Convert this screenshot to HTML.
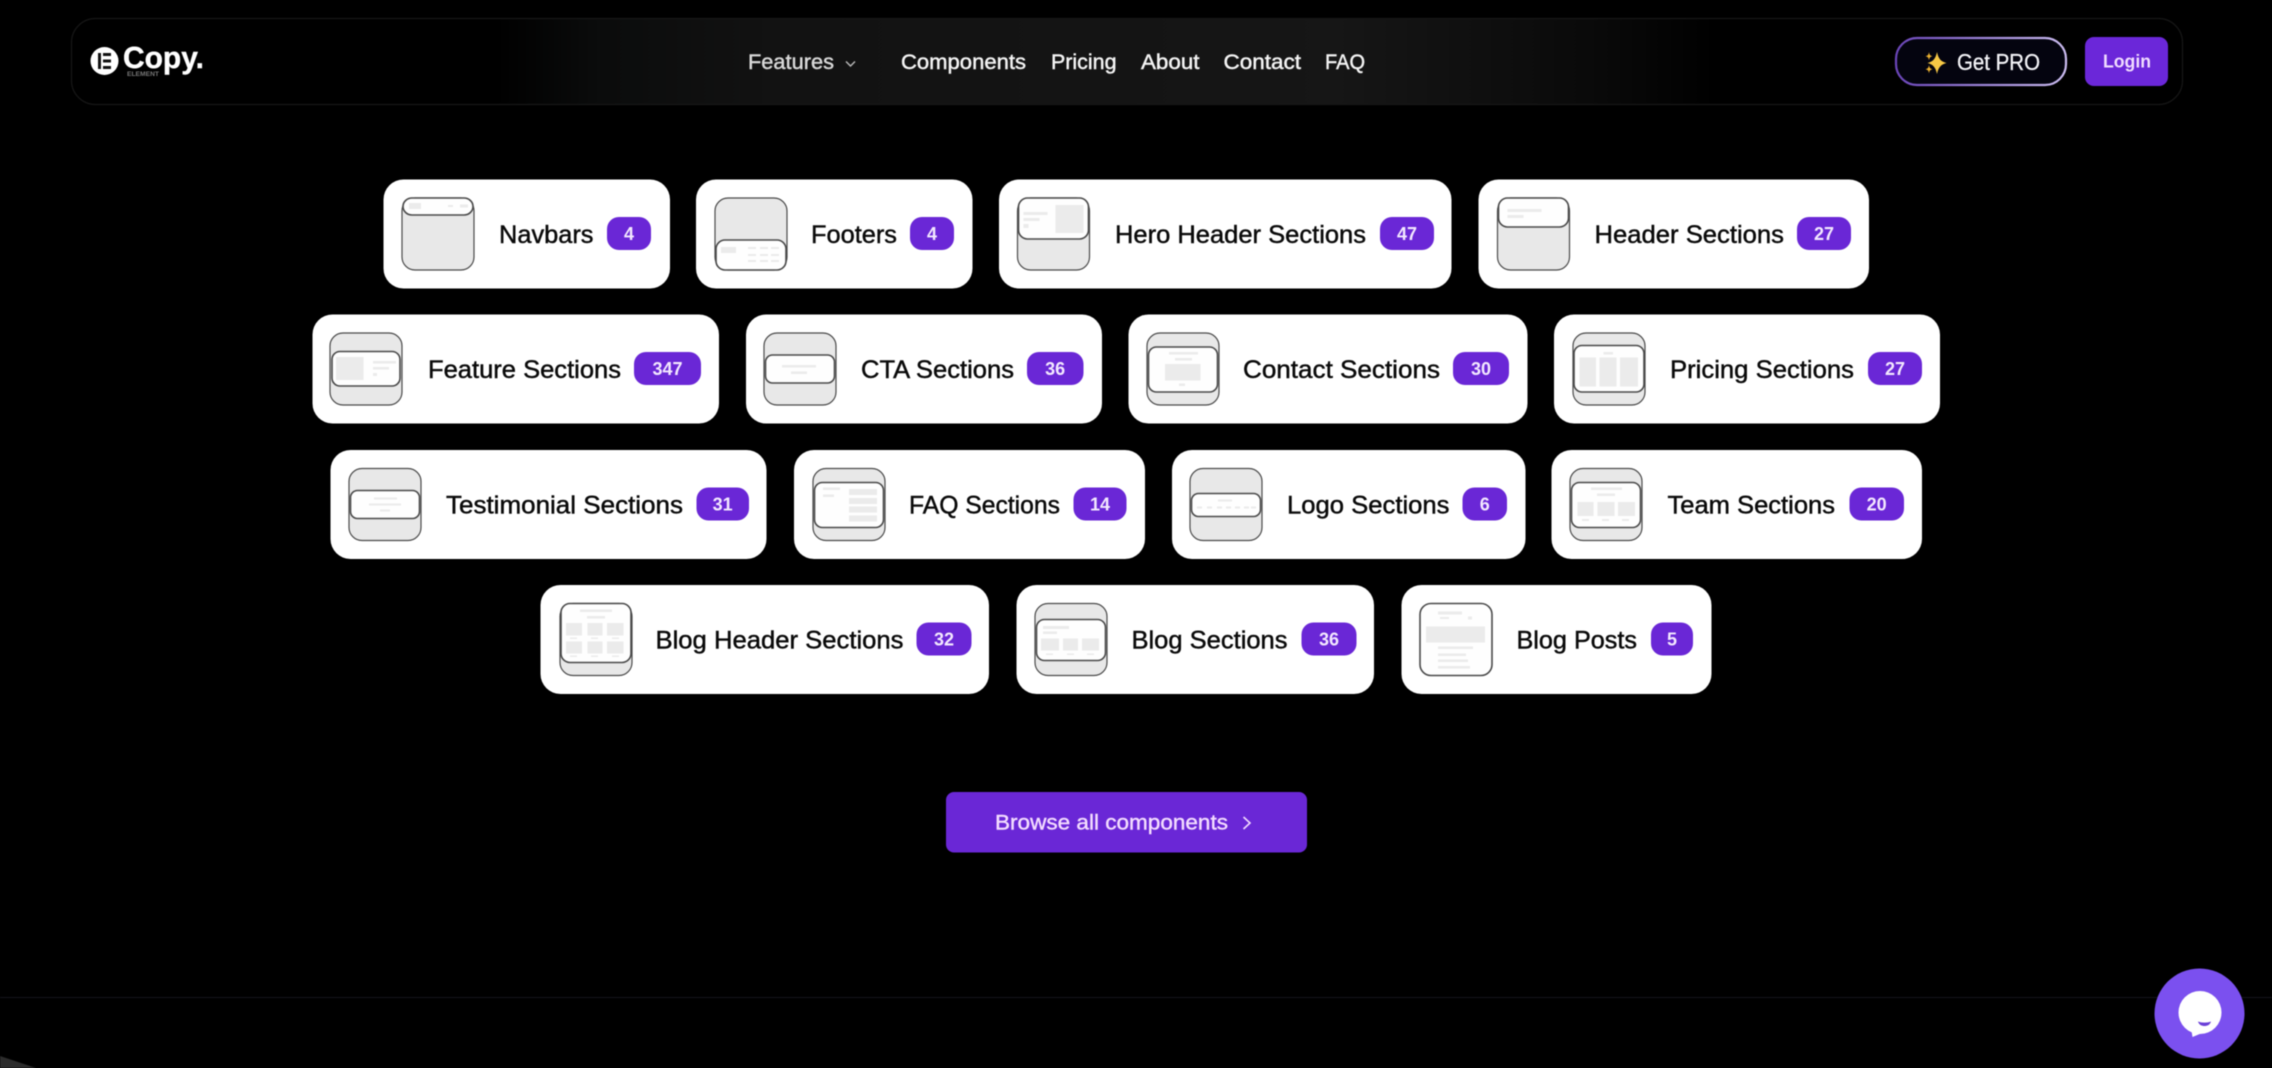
<!DOCTYPE html>
<html lang="en"><head><meta charset="utf-8"><title>Copy Element Components</title>
<style>
html,body{margin:0;padding:0;background:#000;width:2272px;height:1068px;overflow:hidden}
svg{display:block;font-family:"Liberation Sans",sans-serif;filter:blur(.55px)}
.c{fill:#fff}
.o{fill:#e8e8e8;stroke:#4a4a4a;stroke-width:1.2}
.p{fill:#fefefe;stroke:#4a4a4a;stroke-width:1.6}
.g{fill:#ebebeb}
.l{font-size:25px;fill:#0a0a0a;stroke:#0a0a0a;stroke-width:.45}
.b{fill:#6a27d6}
.n{font-size:18px;font-weight:700;fill:#f3e8ff;text-anchor:middle}
.m{font-size:21px;fill:#f4f4f4;stroke:#f4f4f4;stroke-width:.45}
</style></head><body>
<svg width="2272" height="1068" viewBox="0 0 2272 1068" xmlns="http://www.w3.org/2000/svg">
<defs>
<linearGradient id="nv" x1="0" x2="1" y1="0" y2="0">
<stop offset="0" stop-color="#000"/><stop offset=".2" stop-color="#000"/><stop offset=".25" stop-color="#0b0c0c"/><stop offset=".33" stop-color="#121212"/><stop offset=".6" stop-color="#161616"/><stop offset=".72" stop-color="#0a0a0a"/><stop offset=".78" stop-color="#000"/><stop offset="1" stop-color="#000"/>
</linearGradient>
<linearGradient id="pb" x1="0" x2="1" y1="0" y2="0">
<stop offset="0" stop-color="#6a45b8"/><stop offset=".5" stop-color="#9a82d4"/><stop offset="1" stop-color="#cbbcf0"/>
</linearGradient>
</defs>
<rect width="2272" height="1068" fill="#000"/>

<!-- Navbar -->
<rect x="71.500" y="18.500" width="2111" height="86" rx="24" fill="url(#nv)" stroke="#171717" stroke-width="1.2"/>
<circle cx="104.500" cy="61" r="14" fill="#fff"/>
<rect x="98" y="53" width="3" height="16" fill="#111"/>
<rect x="103" y="53" width="8" height="3" fill="#111"/><rect x="103" y="59.500" width="8" height="3" fill="#111"/><rect x="103" y="66" width="8" height="3" fill="#111"/>
<text x="123" y="68" font-size="31" font-weight="700" fill="#fff" stroke="#fff" stroke-width=".4" textLength="81" lengthAdjust="spacingAndGlyphs">Copy.</text>
<text x="127" y="76" font-size="6" font-weight="700" fill="#777" textLength="32" lengthAdjust="spacingAndGlyphs">ELEMENT</text>

<text class="m" x="748" y="69" style="fill:#d8d8d8;stroke:#d8d8d8" textLength="86" lengthAdjust="spacingAndGlyphs">Features</text>
<path d="M846 61.500l4.500 4.500 4.500-4.500" fill="none" stroke="#bbb" stroke-width="1.400"/>
<text class="m" x="901" y="69" textLength="125" lengthAdjust="spacingAndGlyphs">Components</text>
<text class="m" x="1051" y="69" textLength="65.500" lengthAdjust="spacingAndGlyphs">Pricing</text>
<text class="m" x="1141" y="69" textLength="58.500" lengthAdjust="spacingAndGlyphs">About</text>
<text class="m" x="1223.500" y="69" textLength="77.500" lengthAdjust="spacingAndGlyphs">Contact</text>
<text class="m" x="1325" y="69" textLength="40" lengthAdjust="spacingAndGlyphs">FAQ</text>

<rect x="1896" y="38" width="170" height="47" rx="21" fill="#04040f" stroke="url(#pb)" stroke-width="2.200"/>
<path d="M1937 52c1.500 7 4 9.500 9.500 11-5.500 1.500-8 4-9.500 11-1.500-7-4-9.500-9.500-11 5.500-1.500 8-4 9.500-11z" fill="#f7c845"/>
<path d="M1929 52c.5 3 1.200 3.700 3.500 4.200-2.300.5-3 1.200-3.500 4.200-.5-3-1.200-3.700-3.500-4.200 2.300-.5 3-1.200 3.500-4.200zM1929 65c.5 3 1.200 3.700 3.500 4.200-2.300.5-3 1.200-3.500 4.200-.5-3-1.200-3.700-3.500-4.200 2.300-.5 3-1.200 3.500-4.200z" fill="#eab030"/>
<text x="1957" y="70" font-size="23" fill="#f4f4f8" stroke="#f4f4f8" stroke-width=".3" textLength="83" lengthAdjust="spacingAndGlyphs">Get PRO</text>
<rect x="2085" y="37" width="83" height="49" rx="9" fill="#6b27d9"/>
<text x="2103" y="67.500" font-size="18" font-weight="700" fill="#f0dcff" textLength="48" lengthAdjust="spacingAndGlyphs">Login</text>

<!-- Row 1 -->
<rect class="c" x="383.500" y="179.500" width="286.500" height="109" rx="20"/>
<g transform="translate(402,198)"><rect class="o" width="72" height="72" rx="13"/><rect class="p" x="1" y="0" width="70" height="17" rx="9"/><rect class="g" x="7" y="5" width="12" height="6"/><rect class="g" x="46" y="7" width="5" height="2"/><rect class="g" x="58" y="6.500" width="8" height="3"/></g>
<text class="l" x="499" y="243" textLength="94.500" lengthAdjust="spacingAndGlyphs">Navbars</text>
<rect class="b" x="607" y="217" width="44" height="33" rx="12"/><text class="n" x="629" y="240">4</text>

<rect class="c" x="696" y="179.500" width="276.500" height="109" rx="20"/>
<g transform="translate(715,198)"><rect class="o" width="72" height="72" rx="13"/><rect class="p" x="1" y="42" width="70" height="30" rx="9"/><rect class="g" x="6" y="49" width="15" height="6"/><rect class="g" x="33" y="49" width="8" height="2"/><rect class="g" x="45" y="49" width="8" height="2"/><rect class="g" x="56" y="49" width="8" height="2"/><rect class="g" x="33" y="56" width="8" height="2"/><rect class="g" x="45" y="56" width="8" height="2"/><rect class="g" x="56" y="56" width="8" height="2"/><rect class="g" x="33" y="62" width="8" height="2"/><rect class="g" x="45" y="62" width="8" height="2"/><rect class="g" x="56" y="62" width="8" height="2"/></g>
<text class="l" x="811" y="243" textLength="86" lengthAdjust="spacingAndGlyphs">Footers</text>
<rect class="b" x="910" y="217" width="44" height="33" rx="12"/><text class="n" x="932" y="240">4</text>

<rect class="c" x="999" y="179.500" width="452.500" height="109" rx="20"/>
<g transform="translate(1017.500,198)"><rect class="o" width="72" height="72" rx="13"/><rect class="p" x="1" y="0" width="70" height="41" rx="9"/><rect class="g" x="6" y="14" width="24" height="3"/><rect class="g" x="6" y="20" width="16" height="3"/><rect class="g" x="6" y="26" width="5" height="4"/><rect class="g" x="38" y="7" width="28" height="28"/></g>
<text class="l" x="1115" y="243" textLength="251" lengthAdjust="spacingAndGlyphs">Hero Header Sections</text>
<rect class="b" x="1380" y="217" width="54" height="33" rx="12"/><text class="n" x="1407" y="240">47</text>

<rect class="c" x="1478.500" y="179.500" width="390.500" height="109" rx="20"/>
<g transform="translate(1497.500,198)"><rect class="o" width="72" height="72" rx="13"/><rect class="p" x="1" y="0" width="70" height="29" rx="9"/><rect class="g" x="10" y="11" width="34" height="3"/><rect class="g" x="10" y="17" width="16" height="3"/></g>
<text class="l" x="1594.500" y="243" textLength="189.500" lengthAdjust="spacingAndGlyphs">Header Sections</text>
<rect class="b" x="1797" y="217" width="54" height="33" rx="12"/><text class="n" x="1824" y="240">27</text>

<!-- Row 2 -->
<rect class="c" x="312.500" y="314.500" width="406.500" height="109" rx="20"/>
<g transform="translate(330,333)"><rect class="o" width="72" height="72" rx="13"/><rect class="p" x="2" y="18.500" width="68" height="34.500" rx="8"/><rect class="g" x="6" y="24" width="27.500" height="23"/><rect class="g" x="43" y="28" width="23" height="2.500"/><rect class="g" x="43" y="34" width="16" height="2.500"/><rect class="g" x="43" y="40" width="4" height="3"/></g>
<text class="l" x="428" y="378" textLength="193" lengthAdjust="spacingAndGlyphs">Feature Sections</text>
<rect class="b" x="634" y="352" width="67" height="33" rx="12"/><text class="n" x="667.500" y="375">347</text>

<rect class="c" x="746" y="314.500" width="356" height="109" rx="20"/>
<g transform="translate(764,333)"><rect class="o" width="72" height="72" rx="13"/><rect class="p" x="1.500" y="22" width="69" height="28" rx="7"/><rect class="g" x="18" y="32" width="34" height="2.500"/><rect class="g" x="27" y="38.500" width="16" height="2.500"/></g>
<text class="l" x="861" y="378" textLength="153" lengthAdjust="spacingAndGlyphs">CTA Sections</text>
<rect class="b" x="1027" y="352" width="56.500" height="33" rx="12"/><text class="n" x="1055.200" y="375">36</text>

<rect class="c" x="1128.500" y="314.500" width="399" height="109" rx="20"/>
<g transform="translate(1147,333)"><rect class="o" width="72" height="72" rx="13"/><rect class="p" x="1.500" y="14" width="69" height="45" rx="8"/><rect class="g" x="22" y="19" width="29" height="2.500"/><rect class="g" x="28" y="25" width="17" height="2.500"/><rect class="g" x="18" y="31" width="35.500" height="16.500"/><rect class="g" x="32" y="50.500" width="6" height="2.500"/></g>
<text class="l" x="1243" y="378" textLength="197" lengthAdjust="spacingAndGlyphs">Contact Sections</text>
<rect class="b" x="1453" y="352" width="56" height="33" rx="12"/><text class="n" x="1481" y="375">30</text>

<rect class="c" x="1554" y="314.500" width="386" height="109" rx="20"/>
<g transform="translate(1573,333)"><rect class="o" width="72" height="72" rx="13"/><rect class="p" x="1" y="12.500" width="70" height="46.500" rx="8"/><rect class="g" x="30.500" y="19" width="9.500" height="2.500"/><rect class="g" x="6.500" y="24.500" width="16.500" height="29"/><rect class="g" x="26.500" y="24.500" width="17" height="29"/><rect class="g" x="47" y="24.500" width="18" height="29"/></g>
<text class="l" x="1670" y="378" textLength="184" lengthAdjust="spacingAndGlyphs">Pricing Sections</text>
<rect class="b" x="1868" y="352" width="54" height="33" rx="12"/><text class="n" x="1895" y="375">27</text>

<!-- Row 3 -->
<rect class="c" x="330.500" y="450" width="436" height="109" rx="20"/>
<g transform="translate(349,468.500)"><rect class="o" width="72" height="72" rx="13"/><rect class="p" x="1.500" y="22" width="69" height="28" rx="7"/><rect class="g" x="25" y="29" width="23" height="2"/><rect class="g" x="20" y="35" width="32" height="2"/><rect class="g" x="31" y="41" width="10" height="2"/></g>
<text class="l" x="446" y="513.500" textLength="237" lengthAdjust="spacingAndGlyphs">Testimonial Sections</text>
<rect class="b" x="696.500" y="487.500" width="52.500" height="33" rx="12"/><text class="n" x="722.700" y="510.500">31</text>

<rect class="c" x="794" y="450" width="351" height="109" rx="20"/>
<g transform="translate(813,468.500)"><rect class="o" width="72" height="72" rx="13"/><rect class="p" x="1.500" y="14" width="69" height="45" rx="8"/><rect class="g" x="10" y="19" width="17" height="2.500"/><rect class="g" x="10" y="26" width="11" height="2.500"/><rect class="g" x="36" y="20.500" width="28" height="6"/><rect class="g" x="36" y="29.500" width="28" height="6"/><rect class="g" x="36" y="38" width="28" height="6"/><rect class="g" x="36" y="47" width="28" height="6"/></g>
<text class="l" x="909" y="513.500" textLength="151" lengthAdjust="spacingAndGlyphs">FAQ Sections</text>
<rect class="b" x="1073.500" y="487.500" width="53" height="33" rx="12"/><text class="n" x="1100" y="510.500">14</text>

<rect class="c" x="1172" y="450" width="353.500" height="109" rx="20"/>
<g transform="translate(1190,468.500)"><rect class="o" width="72" height="72" rx="13"/><rect class="p" x="1.500" y="25" width="69" height="23" rx="7"/><rect class="g" x="28" y="31" width="14" height="2"/><rect class="g" x="7" y="38" width="5" height="2"/><rect class="g" x="17" y="38" width="5" height="2"/><rect class="g" x="27" y="38" width="5" height="2"/><rect class="g" x="36" y="38" width="5" height="2"/><rect class="g" x="45" y="38" width="5" height="2"/><rect class="g" x="54" y="38" width="5" height="2"/><rect class="g" x="61" y="38" width="5" height="2"/></g>
<text class="l" x="1287" y="513.500" textLength="162.500" lengthAdjust="spacingAndGlyphs">Logo Sections</text>
<rect class="b" x="1462.500" y="487.500" width="44.500" height="33" rx="12"/><text class="n" x="1484.700" y="510.500">6</text>

<rect class="c" x="1551.500" y="450" width="370.500" height="109" rx="20"/>
<g transform="translate(1570,468.500)"><rect class="o" width="72" height="72" rx="13"/><rect class="p" x="1.500" y="14" width="69" height="45" rx="8"/><rect class="g" x="21" y="19" width="31" height="2.500"/><rect class="g" x="27" y="25" width="18" height="2.500"/><rect class="g" x="7.500" y="33.500" width="16" height="14"/><rect class="g" x="27.500" y="33.500" width="17" height="14"/><rect class="g" x="48" y="33.500" width="17" height="14"/><rect class="g" x="12" y="50.500" width="7" height="2"/><rect class="g" x="32" y="50.500" width="7" height="2"/><rect class="g" x="52" y="50.500" width="7" height="2"/></g>
<text class="l" x="1667.500" y="513.500" textLength="167.500" lengthAdjust="spacingAndGlyphs">Team Sections</text>
<rect class="b" x="1849.500" y="487.500" width="54.500" height="33" rx="12"/><text class="n" x="1876.700" y="510.500">20</text>

<!-- Row 4 -->
<rect class="c" x="540.500" y="585" width="448.500" height="109" rx="20"/>
<g transform="translate(560,603.500)"><rect class="o" width="72" height="72" rx="13"/><rect class="p" x="1" y="0" width="70" height="59" rx="9"/><rect class="g" x="20" y="6" width="32" height="2.500"/><rect class="g" x="27" y="12.500" width="18" height="2.500"/><rect class="g" x="6" y="19.500" width="16" height="12.500"/><rect class="g" x="27.500" y="19.500" width="15" height="12.500"/><rect class="g" x="47" y="19.500" width="16.500" height="12.500"/><rect class="g" x="6" y="38" width="16" height="12"/><rect class="g" x="27.500" y="38" width="15" height="12"/><rect class="g" x="47" y="38" width="16.500" height="12"/><rect class="g" x="10" y="34" width="7" height="1.500"/><rect class="g" x="31" y="34" width="7" height="1.500"/><rect class="g" x="52" y="34" width="7" height="1.500"/><rect class="g" x="10" y="52" width="7" height="1.500"/><rect class="g" x="31" y="52" width="7" height="1.500"/><rect class="g" x="52" y="52" width="7" height="1.500"/></g>
<text class="l" x="655.500" y="648.500" textLength="248" lengthAdjust="spacingAndGlyphs">Blog Header Sections</text>
<rect class="b" x="916.500" y="622.500" width="55" height="33" rx="12"/><text class="n" x="944" y="645.500">32</text>

<rect class="c" x="1016.500" y="585" width="357.500" height="109" rx="20"/>
<g transform="translate(1035,603.500)"><rect class="o" width="72" height="72" rx="13"/><rect class="p" x="1.500" y="16" width="69" height="41" rx="8"/><rect class="g" x="8" y="22.500" width="26" height="3"/><rect class="g" x="8" y="28" width="14" height="2.500"/><rect class="g" x="6" y="35" width="18" height="12"/><rect class="g" x="28" y="35" width="15" height="12"/><rect class="g" x="47" y="35" width="17" height="12"/><rect class="g" x="11" y="50" width="7" height="1.500"/><rect class="g" x="32" y="50" width="7" height="1.500"/><rect class="g" x="52" y="50" width="7" height="1.500"/></g>
<text class="l" x="1131.500" y="648.500" textLength="156" lengthAdjust="spacingAndGlyphs">Blog Sections</text>
<rect class="b" x="1301.500" y="622.500" width="55" height="33" rx="12"/><text class="n" x="1329" y="645.500">36</text>

<rect class="c" x="1401.500" y="585" width="310" height="109" rx="20"/>
<g transform="translate(1420,603.500)"><rect class="p" width="72" height="72" rx="11"/><rect class="g" x="18" y="8" width="24" height="3"/><rect class="g" x="20" y="13.500" width="9" height="2"/><rect class="g" x="48" y="13" width="4" height="3"/><rect class="g" x="6" y="23" width="59" height="16"/><rect class="g" x="18" y="43" width="35" height="2.500"/><rect class="g" x="18" y="50" width="28" height="2.500"/><rect class="g" x="18" y="56" width="30" height="2.500"/><rect class="g" x="18" y="62.500" width="32" height="2.500"/></g>
<text class="l" x="1516.500" y="648.500" textLength="120.500" lengthAdjust="spacingAndGlyphs">Blog Posts</text>
<rect class="b" x="1651" y="622.500" width="42" height="33" rx="12"/><text class="n" x="1672" y="645.500">5</text>

<!-- Browse button -->
<rect x="946" y="792" width="361" height="60.500" rx="8" fill="#6a27d6"/>
<text x="995" y="829.500" font-size="21" fill="#f3dcff" stroke="#f3dcff" stroke-width=".4" textLength="233" lengthAdjust="spacingAndGlyphs">Browse all components</text>
<path d="M1243.500 817l6.500 6-6.500 6" fill="none" stroke="#f3dcff" stroke-width="1.600"/>

<!-- Footer line -->
<rect x="0" y="997" width="2272" height="1" fill="#15151c"/>

<!-- Corner streak -->
<path d="M0 1056L36 1068H0z" fill="#2c2c2c"/>

<!-- Chat -->
<circle cx="2199.500" cy="1013.500" r="45" fill="#7b50ef"/>
<circle cx="2200" cy="1012.500" r="21.500" fill="#fff"/>
<path d="M2191 1028l1.500 9 12-5z" fill="#fff"/>
<path d="M2198 1021.500c4 1.500 9 1.500 13 0-1 3.500-4 4.500-6.500 4.500s-5.500-1-6.500-4.500z" fill="#6a3fd8"/>
</svg>
</body></html>
